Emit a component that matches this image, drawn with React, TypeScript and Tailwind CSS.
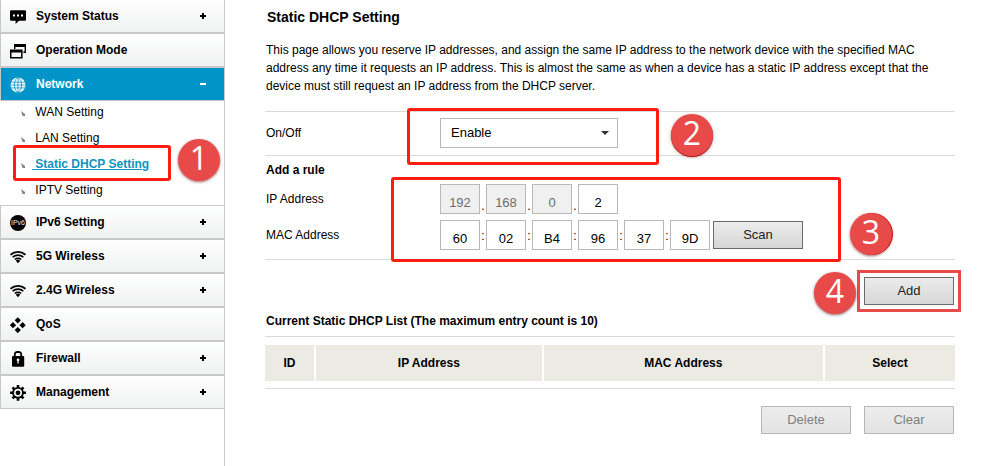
import { Fragment, useState, type ReactNode } from "react";
import clsx from "clsx";

function Icon({ children }: { children: ReactNode }) {
  return (
    <svg viewBox="0 0 16 18" className="h-[18px] w-4 shrink-0" fill="currentColor" aria-hidden="true">
      {children}
    </svg>
  );
}

const ChatIcon = () => (
  <Icon>
    <path d="M1 3.2h14a1 1 0 0 1 1 1v8.6a1 1 0 0 1-1 1H9L5.6 17V13.8H1a1 1 0 0 1-1-1V4.2a1 1 0 0 1 1-1z" />
    <path fill="#fff" d="M3 7.6h2v2H3zM7 7.6h2v2H7zM11 7.6h2v2h-2z" />
  </Icon>
);

const WindowsIcon = () => (
  <Icon>
    <path fillRule="evenodd" d="M4 3h12v9h-2.6v-1.6h1.2V6H5.4v2H4z" />
    <path fillRule="evenodd" d="M0 8.6h12.6v9H0zM1.5 11.6v4.5h9.6v-4.5z" />
  </Icon>
);

const GlobeIcon = () => (
  <Icon>
    <circle cx="8" cy="10" r="7.5" />
    <g fill="none" stroke="#0094c8" strokeWidth="0.8">
      <path d="M8 2.5v15M1 7.2h14M0.5 10h15M1 12.9h14" />
      <ellipse cx="8" cy="10" rx="3.6" ry="7.2" />
    </g>
  </Icon>
);

const Ipv6Icon = () => (
  <Icon>
    <circle cx="8" cy="10" r="8" />
    <text x="8" y="12.4" textAnchor="middle" fontSize="7" fontWeight="400" fill="#eee">
      IPv6
    </text>
  </Icon>
);

const WifiIcon = () => (
  <Icon>
    <g fill="none" stroke="currentColor" strokeWidth="1.7">
      <path d="M0.5 7.8a11 11 0 0 1 15 0" />
      <path d="M2.7 10.2a7.7 7.7 0 0 1 10.6 0" />
      <path d="M4.9 12.5a4.5 4.5 0 0 1 6.2 0" />
    </g>
    <path d="M8 16.2l-2.2-2.4a3 3 0 0 1 4.4 0z" />
  </Icon>
);

const QosIcon = () => (
  <Icon>
    <path d="M7.8 2.2l3.1 3.1-3.1 3.1-3.1-3.1zM3 7.1l3.1 3.1L3 13.3-.1 10.2zM12.6 7.1l3.1 3.1-3.1 3.1-3.1-3.1zM7.8 12l3.1 3.1-3.1 3.1-3.1-3.1z" />
  </Icon>
);

const LockIcon = () => (
  <Icon>
    <path fill="none" stroke="currentColor" strokeWidth="1.8" d="M4.8 8V5.4a2.4 2.4 0 0 1 2.4-2.4h1.6a2.4 2.4 0 0 1 2.4 2.4V8" />
    <rect x="2" y="7" width="12.2" height="10.8" rx="1" />
    <path fill="#fff" d="M8 9.5a1.4 1.4 0 0 1 .7 2.6v2.3H7.4v-2.3A1.4 1.4 0 0 1 8 9.5z" />
  </Icon>
);

const GearIcon = () => (
  <Icon>
    <g stroke="currentColor" strokeWidth="2.6">
      <path d="M8 1.9v15.8M0.1 9.8h15.8M2.5 4.3l11 11M13.5 4.3l-11 11" />
    </g>
    <circle cx="8" cy="9.8" r="5.9" />
    <circle cx="8" cy="9.8" r="3.2" fill="none" stroke="#f5f6f6" strokeWidth="1.6" />
  </Icon>
);

type MenuItem = {
  label: string;
  icon: ReactNode;
  expandable?: boolean;
  children?: string[];
};

const menu: MenuItem[] = [
  { label: "System Status", icon: <ChatIcon />, expandable: true },
  { label: "Operation Mode", icon: <WindowsIcon /> },
  {
    label: "Network",
    icon: <GlobeIcon />,
    expandable: true,
    children: ["WAN Setting", "LAN Setting", "Static DHCP Setting", "IPTV Setting"],
  },
  { label: "IPv6 Setting", icon: <Ipv6Icon />, expandable: true },
  { label: "5G Wireless", icon: <WifiIcon />, expandable: true },
  { label: "2.4G Wireless", icon: <WifiIcon />, expandable: true },
  { label: "QoS", icon: <QosIcon /> },
  { label: "Firewall", icon: <LockIcon />, expandable: true },
  { label: "Management", icon: <GearIcon />, expandable: true },
];

// Numbered step marker that sits on top of the page
function Step({ n, className }: { n: number; className: string }) {
  return (
    <span
      className={clsx(
        "pointer-events-none absolute z-10 flex size-[42px] items-center justify-center rounded-full bg-[#e84a4a] pb-1 font-['Open_Sans',sans-serif] text-[32px] leading-none text-white",
        className
      )}
    >
      {n}
    </span>
  );
}

function Outline({ className }: { className: string }) {
  return <span className={clsx("pointer-events-none absolute border-3", className)} />;
}

function Sidebar() {
  const active = "Static DHCP Setting";

  return (
    <nav className="w-[225px] shrink-0 border-r border-[#c8c8c8]">
      {menu.map((item, i) => (
        <Fragment key={item.label}>
          <button
            type="button"
            className={clsx(
              "flex w-full items-center gap-2.5 border-b border-l border-[#c8c8c8] pr-[18px] pl-[9px] text-left text-xs font-bold",
              i === 0 ? "h-[33px]" : "h-[34px] border-t",
              item.children ? "bg-[#0094c8] text-white" : "bg-linear-to-b from-white to-[#f0f1f1]"
            )}
          >
            {item.icon}
            <span className="flex-1">{item.label}</span>
            {item.expandable && (
              <svg viewBox="0 0 6 6" className="size-1.5" fill="currentColor" aria-hidden="true">
                <path d={item.children ? "M0 2h6v2H0z" : "M0 2h2V0h2v2h2v2H4v2H2V4H0z"} />
              </svg>
            )}
          </button>
          {item.children && (
            <ul>
              {item.children.map((child) => (
                <li key={child} className="relative flex h-[26px] items-center pb-1 pl-[21px] text-xs">
                  <svg viewBox="0 0 4 5" className="mt-0.5 mr-[7px] h-[5px] w-1" fill="#7b8894" aria-hidden="true">
                    <path d="M0 0l4 3v2H1.5z" />
                  </svg>
                  <a href="#" className={clsx(child === active && "font-bold text-[#0f93c0] underline")}>
                    &nbsp;{child}
                  </a>
                  {child === active && (
                    <>
                      <Outline className="-top-2 left-[13px] h-9 w-[158px] rounded-[3px] border-[#ff1c10]" />
                      <Step n={1} className="-top-3.5 left-[178px] shadow-[0_1px_3px_rgba(90,0,0,0.6)]" />
                    </>
                  )}
                </li>
              ))}
            </ul>
          )}
        </Fragment>
      ))}
    </nav>
  );
}

function ActionButton({ children, disabled }: { children: ReactNode; disabled?: boolean }) {
  return (
    <button
      type="button"
      disabled={disabled}
      className="h-7 w-[90px] border border-[#6b6b6b] bg-linear-to-b from-[#ececec] to-[#d6d6d6] text-[13px] text-[#222] disabled:border-[#b5b5b5] disabled:from-[#ededed] disabled:to-[#e3e3e3] disabled:text-[#808080]"
    >
      {children}
    </button>
  );
}

type OctetsProps = {
  label: string;
  values: string[];
  separator: string;
  locked?: number;
  onChange: (values: string[]) => void;
};

function Octets({ label, values, separator, locked = 0, onChange }: OctetsProps) {
  return (
    <div className="flex">
      {values.map((value, i) => (
        <Fragment key={i}>
          {i > 0 && (
            <span className={clsx("w-1.5 text-center text-xs", separator === "." ? "pt-3.5" : "pt-2")}>
              {separator}
            </span>
          )}
          <input
            aria-label={`${label} ${i + 1}`}
            value={value}
            disabled={i < locked}
            onChange={(e) => onChange(values.map((v, j) => (j === i ? e.target.value : v)))}
            className="h-[30px] w-10 border border-[#b8b8b8] bg-white pt-1.5 text-center text-[13px] disabled:bg-[#f0f0f0] disabled:text-[#6d6d6d]"
          />
        </Fragment>
      ))}
    </div>
  );
}

export default function App() {
  const [enabled, setEnabled] = useState("Enable");
  const [ip, setIp] = useState(["192", "168", "0", "2"]);
  const [mac, setMac] = useState(["60", "02", "B4", "96", "37", "9D"]);

  return (
    <div className="flex min-h-screen bg-white font-['Liberation_Sans',Arial,sans-serif] text-black">
      <Sidebar />

      <main className="min-w-0 flex-1 pt-2 pr-[38px] pb-8 pl-10">
        <h1 className="pl-0.5 text-sm leading-[18px] font-bold">Static DHCP Setting</h1>
        <p className="mt-[15px] pl-px text-xs leading-[18px]">
          This page allows you reserve IP addresses, and assign the same IP address to the network device with the
          specified MAC address any time it requests an IP address. This is almost the same as when a device has a
          static IP address except that the device must still request an IP address from the DHCP server.
        </p>

        <div className="relative mt-4 flex items-center border-y border-[#dadada] pt-1.5 pb-[7px]">
          <label htmlFor="on-off" className="w-[175px] pl-px text-xs">
            On/Off
          </label>
          <div className="relative">
            <select
              id="on-off"
              value={enabled}
              onChange={(e) => setEnabled(e.target.value)}
              className="h-[30px] w-[178px] appearance-none border border-[#b8b8b8] bg-white pl-2.5 text-[13px]"
            >
              <option>Enable</option>
              <option>Disable</option>
            </select>
            <svg viewBox="0 0 8 4" className="pointer-events-none absolute top-[13px] right-[9px] h-1 w-2" fill="#333">
              <path d="M0 0h8L4 4z" />
            </svg>
          </div>
          <Outline className="-top-1 left-[142px] h-[57px] w-[252px] rounded-[3px] border-[#ff1c10]" />
          <Step n={2} className="top-0.5 left-[406px] shadow-[0_1px_0_#b51a12,0_1px_3px_rgba(90,0,0,0.6)]" />
        </div>

        <section className="relative border-b border-[#dadada] pb-[9px]">
          <h2 className="flex h-7 items-center pl-px text-xs font-bold">Add a rule</h2>
          <div className="flex items-center">
            <span className="w-[175px] pl-px text-xs">IP Address</span>
            <Octets label="IP Address" values={ip} separator="." locked={3} onChange={setIp} />
          </div>
          <div className="mt-1.5 flex items-center">
            <span className="w-[175px] pl-px text-xs">MAC Address</span>
            <div className="flex items-center gap-[3px]">
              <Octets label="MAC Address" values={mac} separator=":" onChange={setMac} />
              <ActionButton>Scan</ActionButton>
            </div>
          </div>
          <Outline className="top-[21px] left-[126px] h-[85px] w-[450px] rounded-[3px] border-[#ff1c10]" />
          <Step n={3} className="top-[57px] left-[585px] shadow-[1px_0_0_#c9120c,0_1px_3px_rgba(90,0,0,0.6)]" />
        </section>

        <div className="mt-[17px] flex justify-end pr-px">
          <div className="relative flex">
            <ActionButton>Add</ActionButton>
            <Outline className="-inset-[7px] border-[#e84a4a]" />
            <Step n={4} className="-top-[5px] -left-[50px] shadow-[0_1px_3px_rgba(60,0,0,0.6)]" />
          </div>
        </div>

        <h2 className="mt-[7px] mb-1.5 pl-px text-xs leading-[18px] font-bold">
          Current Static DHCP List (The maximum entry count is 10)
        </h2>
        <div className="border-y border-[#dadada] pt-2 pb-[7px]">
          <table className="w-full table-fixed text-xs">
            <thead>
              <tr className="h-9 bg-[#ebebe3]">
                <th className="w-[50px]">ID</th>
                <th className="w-[33%] border-l-2 border-white">IP Address</th>
                <th className="border-l-2 border-white">MAC Address</th>
                <th className="w-[19%] border-l-2 border-white">Select</th>
              </tr>
            </thead>
          </table>
        </div>

        <div className="mt-[17px] flex justify-end gap-[13px] pr-px">
          <ActionButton disabled>Delete</ActionButton>
          <ActionButton disabled>Clear</ActionButton>
        </div>
      </main>
    </div>
  );
}
